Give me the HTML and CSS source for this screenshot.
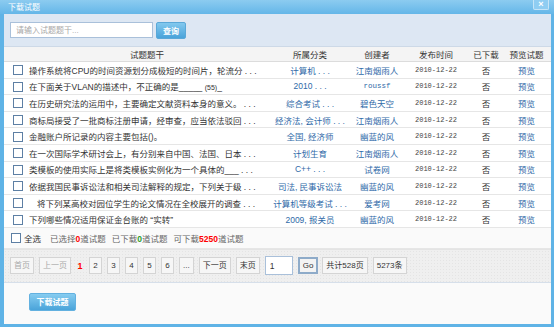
FILE: index.html
```html
<!DOCTYPE html>
<html>
<head>
  <title>下载试题</title>
  <meta charset="utf-8">
  <link rel="stylesheet" href="styles.css">
</head>
<body>
  <div class="dialog">
    <div class="dialog-title">
      <span>下载试题</span>
      <a class="close">×</a>
    </div>
    <div class="dialog-body">
      <div class="search-bar">
        <input class="search-input" type="text" placeholder="请输入试题题干...">
        <button class="btn-query">查询</button>
      </div>

      <table class="question-list">
        <thead>
          <tr>
            <th class="col-check"></th>
            <th class="col-title">试题题干</th>
            <th class="col-cat">所属分类</th>
            <th class="col-author">创建者</th>
            <th class="col-date">发布时间</th>
            <th class="col-done">已下载</th>
            <th class="col-view">预览试题</th>
          </tr>
        </thead>
        <tbody>
          <tr>
            <td><span class="check"></span></td>
            <td class="title">操作系统将CPU的时间资源划分成极短的时间片，轮流分 . . .</td>
            <td class="link">计算机 . . .</td>
            <td class="link">江南烟雨人</td>
            <td class="date">2010-12-22</td>
            <td>否</td>
            <td class="link">预览</td>
          </tr>
          <tr>
            <td><span class="check"></span></td>
            <td class="title">在下面关于VLAN的描述中，不正确的是_____ <small>(55)</small>_</td>
            <td class="link">2010 . . .</td>
            <td class="link mono">roussf</td>
            <td class="date">2010-12-22</td>
            <td>否</td>
            <td class="link">预览</td>
          </tr>
          <tr>
            <td><span class="check"></span></td>
            <td class="title">在历史研究法的运用中，主要确定文献资料本身的意义。 . . .</td>
            <td class="link">综合考试 . . .</td>
            <td class="link">碧色天空</td>
            <td class="date">2010-12-22</td>
            <td>否</td>
            <td class="link">预览</td>
          </tr>
          <tr>
            <td><span class="check"></span></td>
            <td class="title">商标局接受了一批商标注册申请，经审查，应当依法驳回 . . .</td>
            <td class="link">经济法, 会计师 . . .</td>
            <td class="link">江南烟雨人</td>
            <td class="date">2010-12-22</td>
            <td>否</td>
            <td class="link">预览</td>
          </tr>
          <tr>
            <td><span class="check"></span></td>
            <td class="title">金融账户所记录的内容主要包括()。</td>
            <td class="link">全国, 经济师</td>
            <td class="link">幽蓝的风</td>
            <td class="date">2010-12-22</td>
            <td>否</td>
            <td class="link">预览</td>
          </tr>
          <tr>
            <td><span class="check"></span></td>
            <td class="title">在一次国际学术研讨会上，有分别来自中国、法国、日本 . . .</td>
            <td class="link">计划生育</td>
            <td class="link">江南烟雨人</td>
            <td class="date">2010-12-22</td>
            <td>否</td>
            <td class="link">预览</td>
          </tr>
          <tr>
            <td><span class="check"></span></td>
            <td class="title">类模板的使用实际上是将类模板实例化为一个具体的___ . . .</td>
            <td class="link">C++ . . .</td>
            <td class="link">试卷网</td>
            <td class="date">2010-12-22</td>
            <td>否</td>
            <td class="link">预览</td>
          </tr>
          <tr>
            <td><span class="check"></span></td>
            <td class="title">依据我国民事诉讼法和相关司法解释的规定，下列关于级 . . .</td>
            <td class="link">司法, 民事诉讼法</td>
            <td class="link">幽蓝的风</td>
            <td class="date">2010-12-22</td>
            <td>否</td>
            <td class="link">预览</td>
          </tr>
          <tr>
            <td><span class="check"></span></td>
            <td class="title indent">将下列某高校对园位学生的论文情况在全校展开的调查 . . .</td>
            <td class="link">计算机等级考试 . . .</td>
            <td class="link">爱考网</td>
            <td class="date">2010-12-22</td>
            <td>否</td>
            <td class="link">预览</td>
          </tr>
          <tr>
            <td><span class="check"></span></td>
            <td class="title">下列哪些情况适用保证金台账的 “实转”</td>
            <td class="link">2009, 报关员</td>
            <td class="link">幽蓝的风</td>
            <td class="date">2010-12-22</td>
            <td>否</td>
            <td class="link">预览</td>
          </tr>
        </tbody>
      </table>

      <div class="summary">
        <span class="check"></span>
        <span class="select-all">全选</span>
        <span class="stat">已选择<b class="red">0</b>道试题</span>
        <span class="stat">已下载<b class="green">0</b>道试题</span>
        <span class="stat">可下载<b class="red">5250</b>道试题</span>
      </div>

      <div class="pager">
        <span class="page-btn disabled">首页</span>
        <span class="page-btn disabled">上一页</span>
        <span class="page-current">1</span>
        <span class="page-btn num">2</span>
        <span class="page-btn num">3</span>
        <span class="page-btn num">4</span>
        <span class="page-btn num">5</span>
        <span class="page-btn num">6</span>
        <span class="page-btn num">...</span>
        <span class="page-btn">下一页</span>
        <span class="page-btn">末页</span>
        <input class="page-input" type="text" value="1">
        <span class="page-go">Go</span>
        <span class="page-btn">共计528页</span>
        <span class="page-btn">5273条</span>
      </div>

      <div class="actions">
        <button class="btn-download">下载试题</button>
      </div>
    </div>
  </div>
</body>
</html>
```

FILE: styles.css
```css
/* page */
html, body {
  margin: 0;
  padding: 0;
}

body {
  width: 554px;
  height: 327px;
  overflow: hidden;
  font-family: "Liberation Sans", "Noto Sans CJK SC", sans-serif;
  font-size: 8.5px;
  color: #333;
  background: #fff;
}

/* dialog frame */
.dialog {
  height: 327px;
  box-sizing: border-box;
  display: flex;
  flex-direction: column;
  background: #5fb3e6;
  padding: 0 3px 3px 4px;
}

.dialog-title {
  position: relative;
  height: 14px;
  line-height: 15px;
  color: #fff;
  font-size: 8px;
  background: linear-gradient(#8ccbf0, #64b6e8);
  margin: 0 -3px 0 -4px;
  padding-left: 8px;
}

.close {
  position: absolute;
  top: 0;
  right: 5px;
  width: 14px;
  height: 9px;
  line-height: 9px;
  text-align: center;
  font-size: 9px;
  font-weight: bold;
  color: #fff;
  background: #8fcdf2;
  border: 1px solid #c5e4f7;
  border-top: none;
  border-radius: 0 0 2px 2px;
}

.dialog-body {
  flex: 1;
  display: flex;
  flex-direction: column;
  background: #f9f9f9;
}

/* search */
.search-bar {
  display: flex;
  align-items: center;
  gap: 3px;
  height: 32px;
  padding: 0 6px;
  background: #dde7f3;
  border-bottom: 1px solid #cdd9e7;
}

.search-input {
  width: 143px;
  height: 16px;
  box-sizing: border-box;
  margin: 0;
  padding: 0 5px;
  border: 1px solid #a9c0da;
  font-family: inherit;
  font-size: 8px;
  color: #333;
  background: #fff;
}

.search-input::placeholder {
  color: #a8a8a8;
}

.btn-query {
  width: 30px;
  height: 17px;
  margin: 0;
  padding: 0;
  border: 1px solid #5aa8d8;
  border-radius: 2px;
  font-family: inherit;
  font-size: 8px;
  font-weight: bold;
  color: #fff;
  background: linear-gradient(#82c8ee, #49a3da);
}

/* table */
.question-list {
  width: 100%;
  border-collapse: collapse;
  table-layout: fixed;
}

.question-list th {
  height: 14px;
  font-weight: normal;
  color: #333;
  background: #f4f4f4;
  border-bottom: 1px solid #dcdcdc;
  text-align: center;
  padding: 0;
}

.question-list td {
  height: 15.6px;
  padding: 0;
  text-align: center;
  border-bottom: 1px solid #e6e6e6;
  white-space: nowrap;
  overflow: hidden;
  background: #fff;
}

.col-check { width: 22px; }
.col-title { width: 242px; }
.col-cat { width: 84px; }
.col-author { width: 50px; }
.col-date { width: 68px; }
.col-done { width: 32px; }

.question-list td.title {
  text-align: left;
  padding-left: 3px;
  color: #333;
}

.question-list td.indent {
  padding-left: 11px;
}

.title small {
  font-size: 7px;
}

.link {
  color: #2f6aa8;
}

.mono {
  font-family: "Liberation Mono", monospace;
  font-size: 7.5px;
}

.date {
  font-family: "Liberation Mono", monospace;
  font-size: 7px;
  color: #444;
}

/* checkbox */
.check {
  display: inline-block;
  width: 8px;
  height: 8px;
  border: 1px solid #5d7fa4;
  background: #fff;
  vertical-align: middle;
  margin-left: 6px;
}

/* summary */
.summary {
  display: flex;
  align-items: center;
  height: 20px;
  padding-left: 1px;
  border-bottom: 1px solid #e6e6e6;
  background: #fafafa;
}

.select-all {
  margin-left: 3px;
  margin-right: 9px;
  color: #333;
}

.stat {
  margin-right: 6px;
  color: #666;
}

.red { color: #f00; }
.green { color: #2a9d2a; }

/* pager */
.pager {
  display: flex;
  align-items: center;
  gap: 5px;
  height: 32px;
  padding-left: 6px;
  font-size: 8px;
  background-color: #efefef;
  background-image: radial-gradient(#e4e4e4 0.5px, transparent 0.6px);
  background-size: 3px 3px;
  border-top: 1px solid #e4e4e4;
  border-bottom: 1px solid #d6dfea;
}

.page-btn {
  height: 15px;
  line-height: 15px;
  padding: 0 3px;
  border: 1px solid #d4d4d4;
  background: #f6f6f6;
  color: #333;
}

.page-btn.num {
  min-width: 5px;
  text-align: center;
}

.page-btn.disabled {
  color: #aaa;
}

.page-current {
  width: 8px;
  text-align: center;
  color: #f00;
  font-weight: bold;
  font-size: 9px;
}

.page-input {
  width: 28px;
  height: 19px;
  box-sizing: border-box;
  margin: 0;
  padding: 0 4px;
  border: 1px solid #a9c0da;
  font-family: inherit;
  font-size: 8.5px;
  color: #333;
  background: #fff;
}

.page-go {
  height: 13px;
  line-height: 13px;
  padding: 0 3px;
  border: 2px solid #8eabc9;
  background: #f3f3f3;
  color: #333;
  margin-right: -1px;
}

/* actions */
.actions {
  flex: 1;
  padding: 10px 0 0 25px;
  background: #fafafa;
}

.btn-download {
  width: 47px;
  height: 18px;
  margin: 0;
  padding: 0;
  border: 1px solid #63b1e0;
  border-radius: 2px;
  font-family: inherit;
  font-size: 8px;
  font-weight: bold;
  color: #fff;
  background: linear-gradient(#86ccf0, #4aa4da);
}
```
